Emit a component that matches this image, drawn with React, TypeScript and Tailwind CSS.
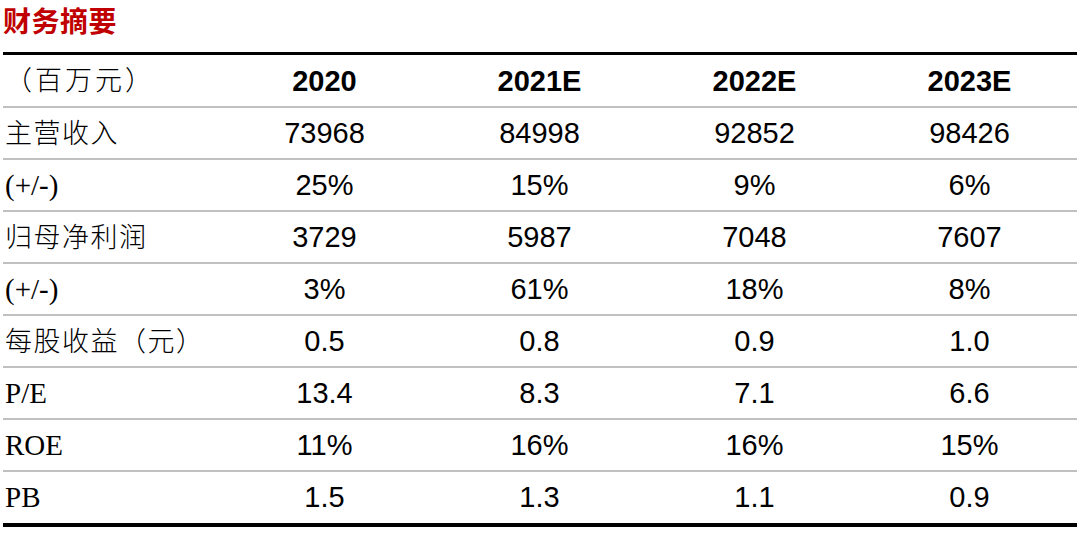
import React from "react";

type Row = { label: string; latin?: boolean; values: string[] };

const years = ["2020", "2021E", "2022E", "2023E"];

const rows: Row[] = [
  { label: "主营收入", values: ["73968", "84998", "92852", "98426"] },
  { label: "(+/-)", latin: true, values: ["25%", "15%", "9%", "6%"] },
  { label: "归母净利润", values: ["3729", "5987", "7048", "7607"] },
  { label: "(+/-)", latin: true, values: ["3%", "61%", "18%", "8%"] },
  { label: "每股收益（元）", values: ["0.5", "0.8", "0.9", "1.0"] },
  { label: "P/E", latin: true, values: ["13.4", "8.3", "7.1", "6.6"] },
  { label: "ROE", latin: true, values: ["11%", "16%", "16%", "15%"] },
  { label: "PB", latin: true, values: ["1.5", "1.3", "1.1", "0.9"] },
];

const serif = "font-['Liberation_Serif','Noto_Sans_CJK_SC',serif]";
const sans = "font-['Liberation_Sans','Noto_Sans_CJK_SC',sans-serif]";

export default function App() {
  return (
    <div className="w-[1080px] h-[534px] bg-white px-[3px] overflow-hidden">
      {/* Title */}
      <div className="h-[52px] flex items-start pt-[3px]">
        <h1 className="text-[28px] leading-[34px] font-bold text-[#c00000] font-['Noto_Sans_CJK_SC',sans-serif] tracking-[0.5px]">
          财务摘要
        </h1>
      </div>

      <div className="border-t-[3px] border-b-[4px] border-black">
        {/* Header */}
        <div className="grid grid-cols-[214px_repeat(4,1fr)] h-[51px] pt-[2px] items-center">
          <div className={`${serif} text-[27px] font-light pl-[2px] text-black tracking-[3px]`}>（百万元）</div>
          {years.map((y) => (
            <div key={y} className={`${sans} text-[29px] font-bold text-center text-black`}>
              {y}
            </div>
          ))}
        </div>

        {rows.map((r, i) => (
          <div
            key={i}
            className="grid grid-cols-[214px_repeat(4,1fr)] h-[52px] pt-[2px] items-center border-t-2 border-[#c0c0c0]"
          >
            <div
              className={`${serif} pl-[2px] text-black ${
                r.latin ? "text-[29px]" : "text-[27px] font-light tracking-[1.5px]"
              }`}
            >
              {r.label}
            </div>
            {r.values.map((v, j) => (
              <div key={j} className={`${sans} text-[29px] text-center text-black`}>
                {v}
              </div>
            ))}
          </div>
        ))}
        <div className="h-px" />
      </div>
    </div>
  );
}
